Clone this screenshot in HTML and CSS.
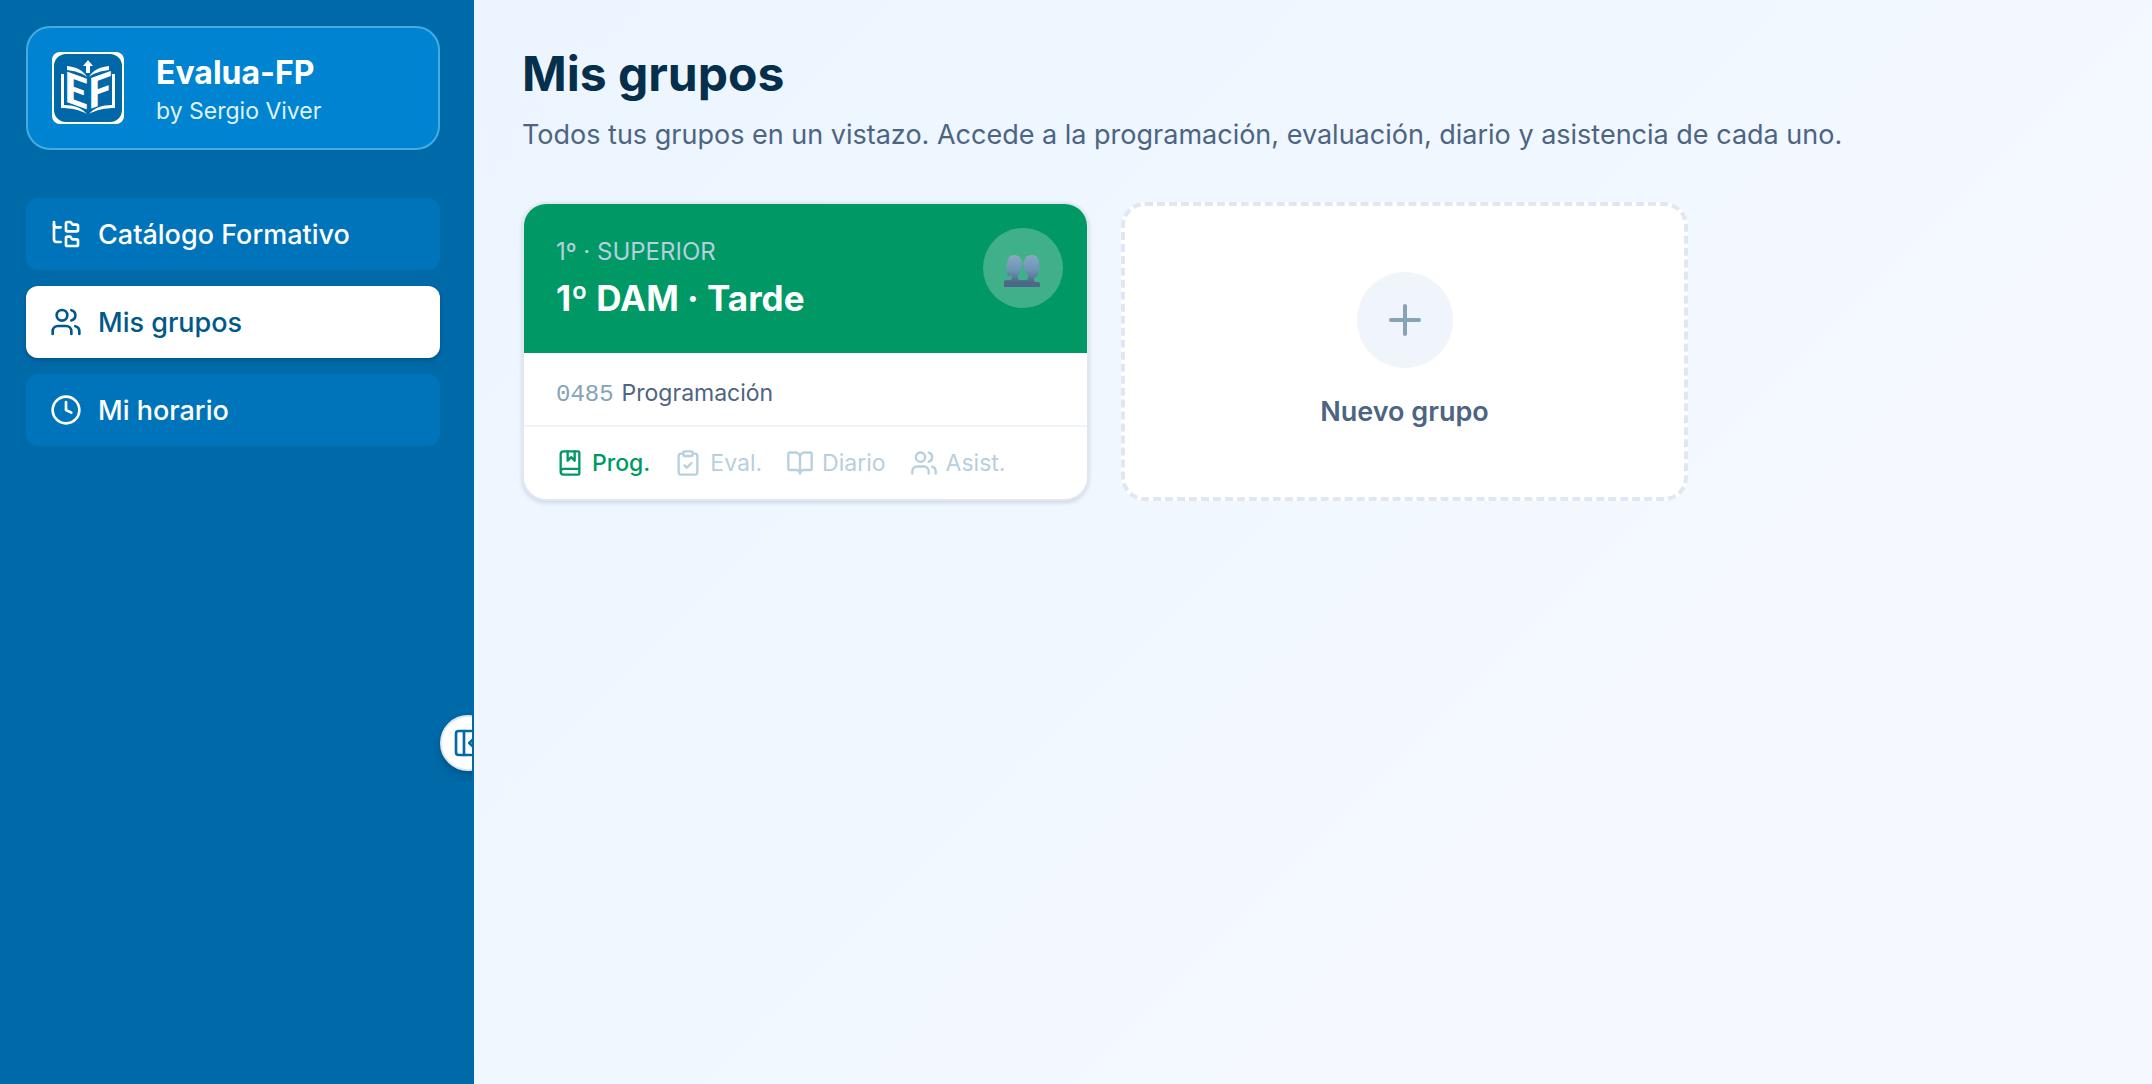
FILE: index.html
```html
<!DOCTYPE html>
<html lang="es">
<head>
    <meta charset="UTF-8">
    <meta name="viewport" content="width=device-width, initial-scale=1.0">
    <title>Evalua-FP</title>
    <link rel="stylesheet" href="styles.css">
</head>
<body>
    <div class="app">
        <aside class="sidebar">
            <a class="brand" href="#">
                <svg class="logo" viewBox="0 0 72 72" aria-hidden="true">
                    <rect width="72" height="72" rx="8" fill="#fff"/>
                    <rect x="2" y="2" width="68" height="68" rx="12" fill="#0067a8"/>
                    <path d="M36 8l5 6h-3v7h-4v-7h-3z" fill="#fff"/>
                    <path d="M15 14c9 1 16 4 20 11c-5-4-12-6-20-7zM57 14c-9 1-16 4-20 11c5-4 12-6 20-7z" fill="#fff"/>
                    <path d="M9 22h3v31c10 0 18 3 23 9c-7-4-16-6-26-6zM63 22h-3v31c-10 0-18 3-23 9c7-4 16-6 26-6z" fill="#fff"/>
                    <text class="logo-letter" x="12" y="50" transform="skewY(20)" transform-origin="15 50">E</text>
                    <text class="logo-letter" x="36" y="57" transform="skewY(-20)" transform-origin="38 57">F</text>
                </svg>
                <div class="brand-text">
                    <p class="brand-name">Evalua-FP</p>
                    <p class="brand-author">by Sergio Viver</p>
                </div>
            </a>

            <nav class="menu">
                <a class="menu-item" href="#">
                    <svg class="icon" viewBox="0 0 24 24"><path d="M20 10a1 1 0 0 0 1-1V6a1 1 0 0 0-1-1h-2.500a1 1 0 0 1-.8-.4l-.9-1.200A1 1 0 0 0 15 3h-2a1 1 0 0 0-1 1v5a1 1 0 0 0 1 1Z"/><path d="M20 21a1 1 0 0 0 1-1v-3a1 1 0 0 0-1-1h-2.900a1 1 0 0 1-.88-.55l-.42-.85a1 1 0 0 0-.92-.6H13a1 1 0 0 0-1 1v5a1 1 0 0 0 1 1Z"/><path d="M3 5a2 2 0 0 0 2 2h3"/><path d="M3 3v13a2 2 0 0 0 2 2h3"/></svg>
                    Catálogo Formativo
                </a>
                <a class="menu-item active" href="#">
                    <svg class="icon" viewBox="0 0 24 24"><path d="M16 21v-2a4 4 0 0 0-4-4H6a4 4 0 0 0-4 4v2"/><circle cx="9" cy="7" r="4"/><path d="M22 21v-2a4 4 0 0 0-3-3.870"/><path d="M16 3.130a4 4 0 0 1 0 7.750"/></svg>
                    Mis grupos
                </a>
                <a class="menu-item" href="#">
                    <svg class="icon" viewBox="0 0 24 24"><circle cx="12" cy="12" r="10"/><path d="M12 6v6l4 2"/></svg>
                    Mi horario
                </a>
            </nav>

            <button class="collapse" type="button" aria-label="Contraer menú">
                <svg class="icon" viewBox="0 0 24 24"><rect x="3" y="3" width="18" height="18" rx="2"/><path d="M9 3v18"/><path d="m16 15-3-3 3-3"/></svg>
            </button>
        </aside>

        <main class="content">
            <h1>Mis grupos</h1>
            <p class="intro">Todos tus grupos en un vistazo. Accede a la programación, evaluación, diario y asistencia de cada uno.</p>

            <div class="groups">
                <article class="card">
                    <header class="card-head">
                        <div>
                            <p class="level">1º · SUPERIOR</p>
                            <h2>1º DAM · Tarde</h2>
                        </div>
                        <div class="avatar">
                            <svg class="people" viewBox="0 0 38 32" aria-hidden="true">
                                <defs>
                                    <linearGradient id="bust" x1="0" y1="0" x2="0" y2="1">
                                        <stop offset="0" stop-color="#86abc2"/>
                                        <stop offset="0.45" stop-color="#6c94b4"/>
                                        <stop offset="0.8" stop-color="#4d6788"/>
                                        <stop offset="1" stop-color="#4d6788"/>
                                    </linearGradient>
                                </defs>
                                <path fill="url(#bust)" d="M0 32v-5q0-2 2-2h4q2 0 2-2v-2H5q-2 0-2-3v-3l-1-3 1-2q0-10 7-10 8 0 8 9 0 6-4 11v3q0 2 2 2h6q2 0 2-2v-3q-4-3-4-8l-1-3 1-3q1-6 8-6 7 0 7 8v3l1 2-1 3q0 5-5 7v2q0 2 2 2h2q2 0 2 2v5z"/>
                            </svg>
                        </div>
                    </header>
                    <p class="module"><span class="code">0485</span> <span>Programación</span></p>
                    <footer class="actions">
                        <a class="action on" href="#">
                            <svg class="icon" viewBox="0 0 24 24"><path d="M10 2v8l3-3 3 3V2"/><path d="M4 19.500v-15A2.500 2.500 0 0 1 6.500 2H19a1 1 0 0 1 1 1v18a1 1 0 0 1-1 1H6.500a1 1 0 0 1 0-5H20"/></svg>
                            Prog.
                        </a>
                        <button class="action" type="button" disabled>
                            <svg class="icon" viewBox="0 0 24 24"><rect x="8" y="2" width="8" height="4" rx="1"/><path d="M16 4h2a2 2 0 0 1 2 2v14a2 2 0 0 1-2 2H6a2 2 0 0 1-2-2V6a2 2 0 0 1 2-2h2"/><path d="m9 14 2 2 4-4"/></svg>
                            Eval.
                        </button>
                        <button class="action" type="button" disabled>
                            <svg class="icon" viewBox="0 0 24 24"><path d="M12 7v14"/><path d="M3 18a1 1 0 0 1-1-1V4a1 1 0 0 1 1-1h5a4 4 0 0 1 4 4 4 4 0 0 1 4-4h5a1 1 0 0 1 1 1v13a1 1 0 0 1-1 1h-6a3 3 0 0 0-3 3 3 3 0 0 0-3-3z"/></svg>
                            Diario
                        </button>
                        <button class="action" type="button" disabled>
                            <svg class="icon" viewBox="0 0 24 24"><path d="M16 21v-2a4 4 0 0 0-4-4H6a4 4 0 0 0-4 4v2"/><circle cx="9" cy="7" r="4"/><path d="M22 21v-2a4 4 0 0 0-3-3.870"/><path d="M16 3.130a4 4 0 0 1 0 7.750"/></svg>
                            Asist.
                        </button>
                    </footer>
                </article>

                <button class="new-group" type="button">
                    <span class="plus">
                        <svg class="icon" viewBox="0 0 24 24"><path d="M5 12h14"/><path d="M12 5v14"/></svg>
                    </span>
                    Nuevo grupo
                </button>
            </div>
        </main>
    </div>
</body>
</html>
```

FILE: styles.css
```css
* {
    box-sizing: border-box;
    margin: 0;
    padding: 0;
}
body {
    font-family: Inter, "Liberation Sans", sans-serif;
    color: #052f4a;
}
a {
    color: inherit;
    text-decoration: none;
}
button {
    font: inherit;
    border: none;
    background: none;
    cursor: pointer;
}
.icon {
    width: 32px;
    height: 32px;
    flex-shrink: 0;
    fill: none;
    stroke: currentColor;
    stroke-width: 2;
    stroke-linecap: round;
    stroke-linejoin: round;
}
.app {
    display: flex;
    min-height: 100vh;
}

/* sidebar */
.sidebar {
    position: relative;
    width: 474px;
    flex-shrink: 0;
    padding: 26px 32px 26px 26px;
    background: #0069a8;
    border-right: 2px solid #0069a8;
    overflow: hidden;
}
.brand {
    display: flex;
    align-items: center;
    gap: 32px;
    height: 124px;
    padding: 0 24px;
    background: #0084d1;
    border: 2px solid #45abe2;
    border-radius: 24px;
    color: #fff;
}
.logo {
    width: 72px;
    height: 72px;
}
.logo-letter {
    font-family: Lato, sans-serif;
    font-size: 42px;
    font-weight: 900;
    fill: #fff;
}
.brand-text {
    padding-top: 6px;
}
.brand-name {
    font-size: 32px;
    line-height: 40px;
    font-weight: 700;
}
.brand-author {
    font-size: 23px;
    line-height: 36px;
    color: #dff2fe;
}
.menu {
    display: flex;
    flex-direction: column;
    gap: 16px;
    margin-top: 48px;
}
.menu-item {
    display: flex;
    align-items: center;
    gap: 16px;
    height: 72px;
    padding: 0 24px;
    border-radius: 12px;
    background: #0074ba;
    color: #fff;
    font-size: 27px;
    font-weight: 500;
}
.menu-item.active {
    background: #fff;
    color: #00598a;
    box-shadow: 0 2px 4px rgba(0, 0, 0, 0.2);
}
/* half hidden behind the sidebar edge */
.collapse {
    position: absolute;
    right: -24px;
    top: 715px;
    display: flex;
    align-items: center;
    justify-content: center;
    width: 56px;
    height: 56px;
    border: 2px solid #dfe8f2;
    border-radius: 50%;
    background: #fff;
    color: #0069a8;
    box-shadow: 0 4px 8px rgba(0, 0, 0, 0.2);
}

/* main */
.content {
    flex: 1;
    padding: 44px 48px;
    background: linear-gradient(135deg, #ecf5ff, #f0f7ff 40%, #f5f9ff 70%, #f5f9ff);
}
h1 {
    font-size: 48px;
    line-height: 60px;
    font-weight: 700;
}
.intro {
    margin-top: 9px;
    font-size: 27px;
    line-height: 44px;
    color: #4d6482;
}
.groups {
    display: grid;
    grid-template-columns: 1fr 1fr;
    gap: 32px;
    max-width: 1166px;
    margin-top: 45px;
}
.card {
    overflow: hidden;
    border: 2px solid #dfe8f2;
    border-radius: 24px;
    background: #fff;
    box-shadow: 0 2px 4px rgba(5, 47, 74, 0.15);
}
.card-head {
    display: flex;
    justify-content: space-between;
    height: 149px;
    padding: 24px 24px 0 32px;
    background: #009966;
    color: #fff;
}
.level {
    margin-top: 6px;
    font-size: 24px;
    line-height: 36px;
    color: #b5d0de;
}
.card-head h2 {
    font-size: 35px;
    line-height: 56px;
    font-weight: 700;
}
.avatar {
    display: flex;
    align-items: center;
    justify-content: center;
    width: 80px;
    height: 80px;
    padding-top: 6px;
    border-radius: 50%;
    background: #40b08a;
}
.people {
    width: 38px;
    height: 32px;
}
.module {
    display: flex;
    align-items: baseline;
    gap: 8px;
    padding: 22px 32px 12px;
    font-size: 23px;
    line-height: 36px;
    color: #4d6482;
}
.code {
    font-family: "Liberation Mono", monospace;
    font-size: 24px;
    color: #86a3b8;
}
.actions {
    display: flex;
    gap: 24px;
    padding: 18px 32px;
    border-top: 2px solid #edf4fa;
}
.action {
    display: flex;
    align-items: center;
    gap: 8px;
    font-size: 23px;
    line-height: 36px;
    color: #b8cfde;
}
.action .icon {
    width: 28px;
    height: 28px;
}
.action.on {
    color: #009966;
    font-weight: 500;
}
.new-group {
    display: flex;
    flex-direction: column;
    align-items: center;
    justify-content: center;
    gap: 24px;
    border: 4px dashed #dfe8f2;
    border-radius: 24px;
    background: #fff;
    color: #4d6482;
    font-size: 27px;
    line-height: 40px;
    font-weight: 600;
}
.plus {
    display: flex;
    align-items: center;
    justify-content: center;
    width: 96px;
    height: 96px;
    border-radius: 50%;
    background: #eff5fb;
    color: #86a3b8;
}
.plus .icon {
    width: 48px;
    height: 48px;
}
```
